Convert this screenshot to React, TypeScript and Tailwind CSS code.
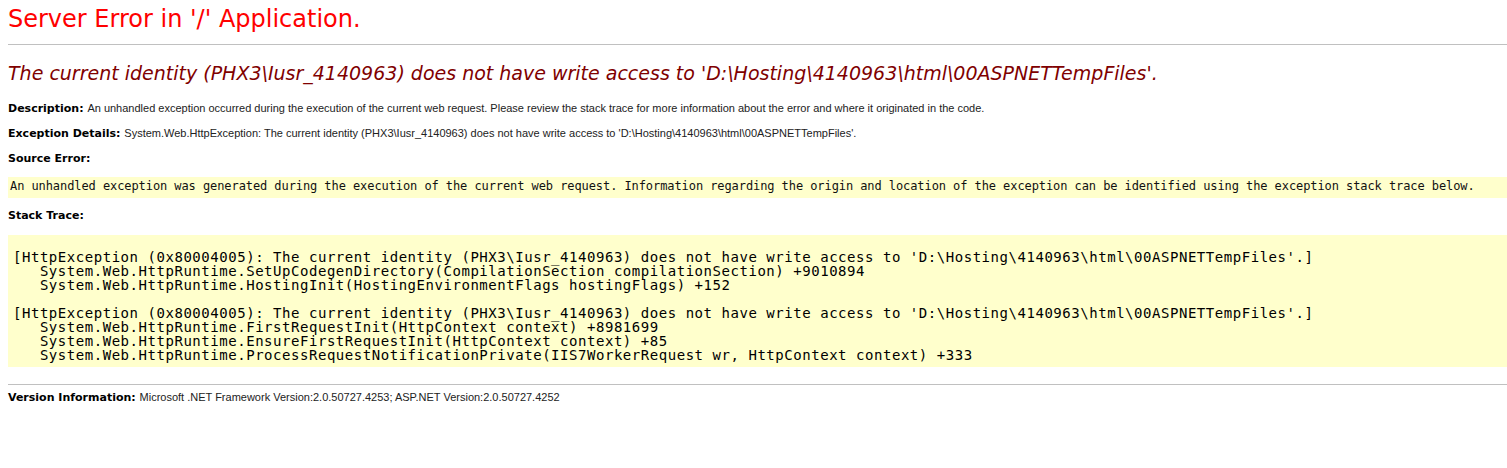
const verdana = "font-['DejaVu_Sans',Verdana,sans-serif]"
const arial = "font-['Liberation_Sans',Arial,sans-serif]"

const stackTrace = `[HttpException (0x80004005): The current identity (PHX3\\Iusr_4140963) does not have write access to 'D:\\Hosting\\4140963\\html\\00ASPNETTempFiles'.]
   System.Web.HttpRuntime.SetUpCodegenDirectory(CompilationSection compilationSection) +9010894
   System.Web.HttpRuntime.HostingInit(HostingEnvironmentFlags hostingFlags) +152

[HttpException (0x80004005): The current identity (PHX3\\Iusr_4140963) does not have write access to 'D:\\Hosting\\4140963\\html\\00ASPNETTempFiles'.]
   System.Web.HttpRuntime.FirstRequestInit(HttpContext context) +8981699
   System.Web.HttpRuntime.EnsureFirstRequestInit(HttpContext context) +85
   System.Web.HttpRuntime.ProcessRequestNotificationPrivate(IIS7WorkerRequest wr, HttpContext context) +333`

function Label({ children }: { children: React.ReactNode }) {
  return <b className="font-bold text-black">{children}</b>
}

function Line({ className, children }: { className?: string; children: React.ReactNode }) {
  return <p className={`${verdana} text-[11px] leading-[14px] ${className ?? ''}`}>{children}</p>
}

export default function App() {
  return (
    <div className="min-h-[468px] bg-white pl-[8px] pt-[5px]">
      {/* Page title */}
      <h1 className={`${verdana} text-[24px] leading-[28px] font-normal text-[#ff0000]`}>
        Server Error in '/' Application.
      </h1>
      <hr className="mt-[11px] border-0 h-px bg-[#c0c0c0]" />

      <h2 className={`${verdana} mt-[16px] text-[19px] leading-[24px] italic font-normal text-[#800000]`}>
        The current identity (PHX3\Iusr_4140963) does not have write access to 'D:\Hosting\4140963\html\00ASPNETTempFiles'.
      </h2>

      {/* Details */}
      <Line className="mt-[16px]">
        <Label>Description: </Label>
        <span className={`${arial} text-[#222]`}>
          An unhandled exception occurred during the execution of the current web request. Please review the stack trace for more information about the error and where it originated in the code.
        </span>
      </Line>
      <Line className="mt-[10px]">
        <Label>Exception Details: </Label>
        <span className={`${arial} text-[#222]`}>
          System.Web.HttpException: The current identity (PHX3\Iusr_4140963) does not have write access to 'D:\Hosting\4140963\html\00ASPNETTempFiles'.
        </span>
      </Line>
      <Line className="mt-[11px]">
        <Label>Source Error:</Label>
      </Line>

      <div className="mt-[11px] bg-[#ffffcc] pl-[2px] pt-[1px] pb-[4px]">
        <code className="block font-['DejaVu_Sans_Mono',Consolas,monospace] text-[12px] leading-[16px] tracking-[-0.08px] text-[#111] whitespace-pre">
          An unhandled exception was generated during the execution of the current web request. Information regarding the origin and location of the exception can be identified using the exception stack trace below.
        </code>
      </div>

      <Line className="mt-[11px]">
        <Label>Stack Trace:</Label>
      </Line>

      {/* Stack trace */}
      <div className="mt-[12px] bg-[#ffffcc] pl-[5px] pt-[15px] pb-[5px]">
        <pre className="font-['DejaVu_Sans_Mono',Consolas,monospace] text-[14px] leading-[14px] tracking-[0.54px] text-black">
          {stackTrace}
        </pre>
      </div>

      <hr className="mt-[17px] border-0 h-px bg-[#c0c0c0]" />

      <Line className="mt-[5px]">
        <Label>Version Information: </Label>
        <span className={`${arial} text-[#222]`}>
          Microsoft .NET Framework Version:2.0.50727.4253; ASP.NET Version:2.0.50727.4252
        </span>
      </Line>
    </div>
  )
}
